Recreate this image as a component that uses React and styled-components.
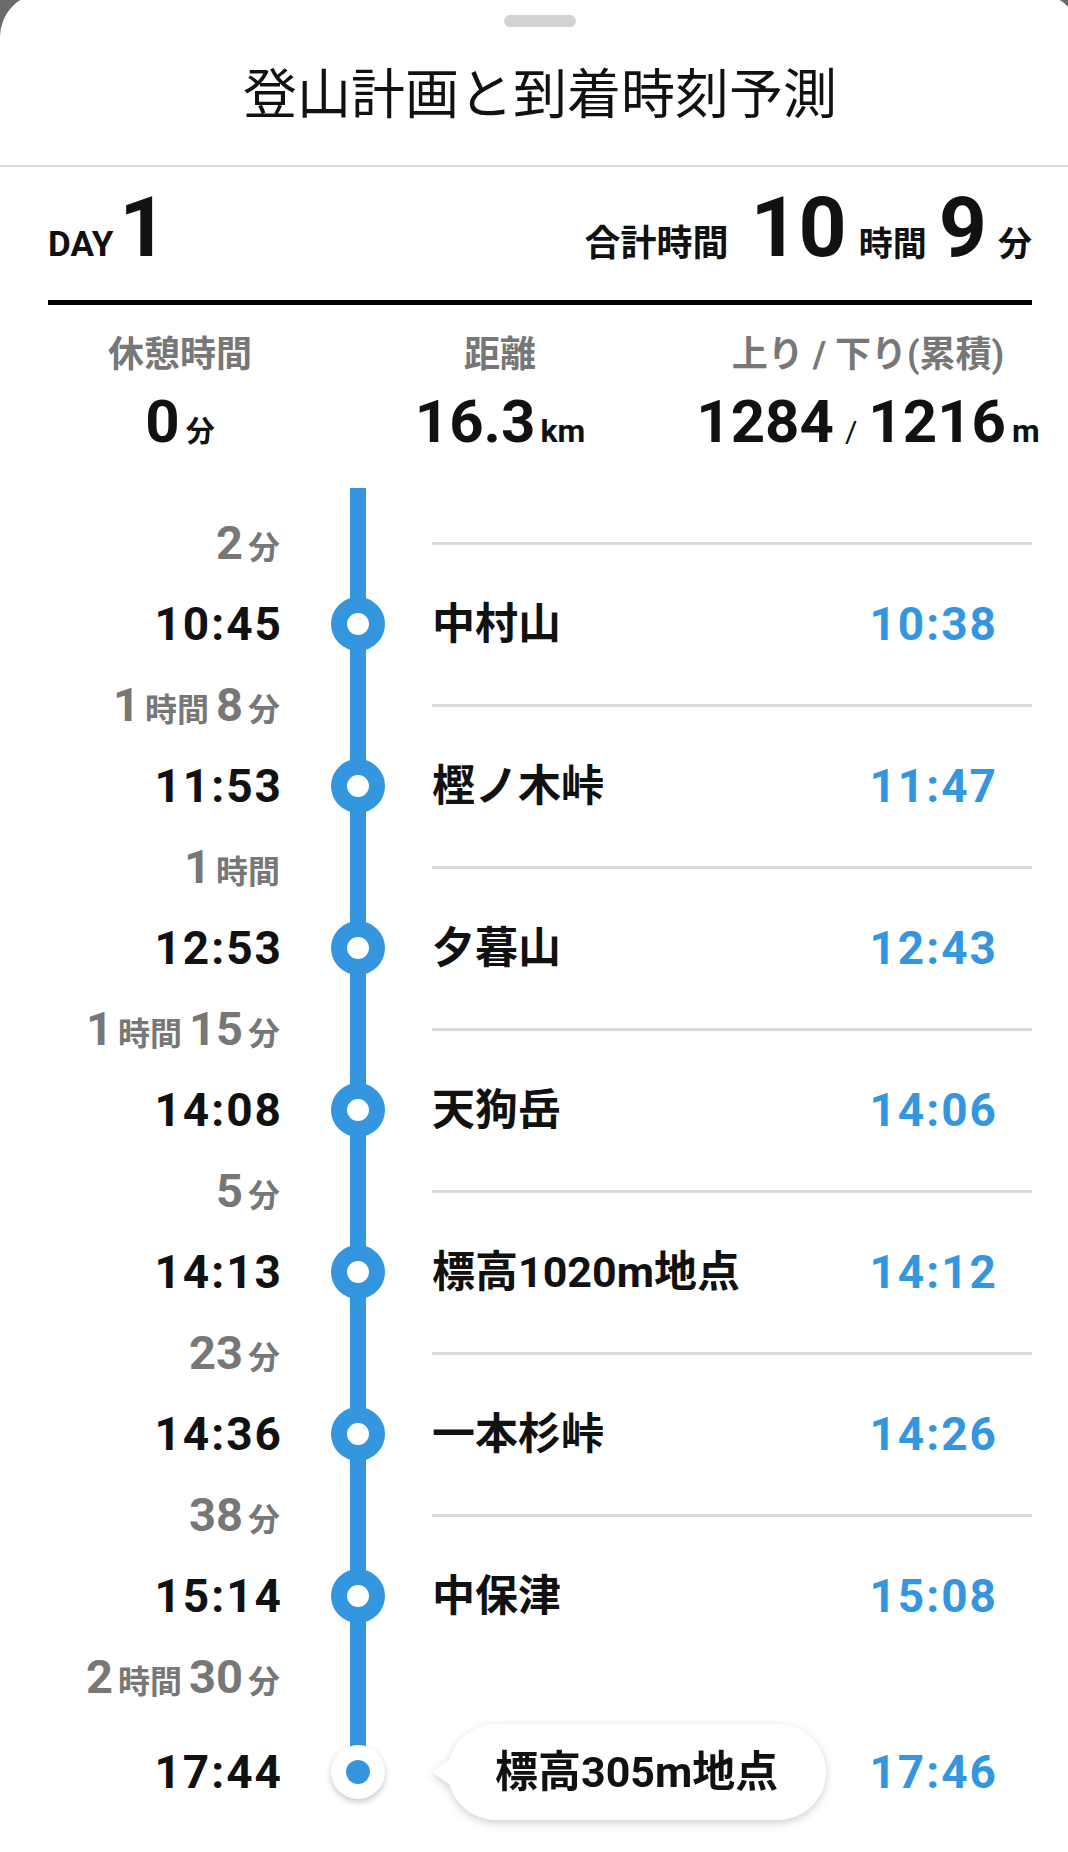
import React from 'react';
import styled, { createGlobalStyle } from 'styled-components';

const FONT = `"Roboto", "Noto Sans CJK JP", sans-serif`;
const BLUE = '#3596e0';
const GREY = '#777777';
const INK = '#111111';

const Global = createGlobalStyle`
  html, body { margin: 0; padding: 0; background: #6b6b6b; overflow-x: hidden; }
  body { font-family: ${FONT}; color: ${INK}; }
  * { box-sizing: border-box; }
`;

const Sheet = styled.div`
  width: 1080px;
  margin-top: -7px;
  min-height: calc(100vh + 7px);
  background: #fff;
  border-radius: 44px 44px 0 0;
  overflow: hidden;
`;

const Top = styled.header`
  padding: 22px 48px 42px;
  border-bottom: 2px solid #dcdcdc;
  display: flex;
  flex-direction: column;
  align-items: center;
`;

const Handle = styled.div`
  width: 72px;
  height: 12px;
  border-radius: 6px;
  background: #d3d3d3;
`;

const Title = styled.h1`
  margin: 32px 0 0;
  font-family: "Noto Sans CJK JP", sans-serif;
  font-weight: 400;
  font-size: 54px;
  line-height: 64px;
  text-align: center;
  color: ${INK};
`;

const Content = styled.div`
  padding: 0 48px;
`;

const DayRow = styled.div`
  display: flex;
  justify-content: space-between;
  align-items: baseline;
  margin-top: 19px;
  padding-bottom: 30px;
  border-bottom: 5px solid #000;
`;

const Group = styled.div`
  display: flex;
  align-items: baseline;
`;

const Label = styled.span`
  font-size: ${(p) => p.$size || 34}px;
  line-height: 40px;
  font-weight: 700;
  margin-left: ${(p) => p.$ml || 0}px;
`;

const Huge = styled.span`
  font-size: 84px;
  line-height: 84px;
  font-weight: 700;
  margin-left: ${(p) => p.$ml || 0}px;
`;

const Stats = styled.div`
  display: grid;
  grid-template-columns: 264px 376px 360px;
  margin: 28px -16px 0 0;
`;

const Stat = styled.div`
  display: flex;
  flex-direction: column;
  align-items: center;
`;

const StatLabel = styled.div`
  font-size: 36px;
  line-height: 44px;
  font-weight: 700;
  color: ${GREY};
  white-space: nowrap;
`;

const StatValue = styled.div`
  margin-top: 10px;
  height: 70px;
  display: flex;
  align-items: baseline;
  white-space: nowrap;
`;

const Big = styled.span`
  font-size: 60px;
  line-height: 70px;
  font-weight: 700;
`;

const Unit = styled.span`
  font-size: ${(p) => p.$size || 32}px;
  line-height: 32px;
  font-weight: 700;
  margin-left: ${(p) => p.$ml || 4}px;
`;

const Slash = styled.span`
  font-size: 30px;
  line-height: 30px;
  font-weight: 400;
  margin: 0 11px;
`;

const Timeline = styled.div`
  margin-top: 31px;
  padding-top: 20px;
  background: linear-gradient(${BLUE}, ${BLUE}) no-repeat 302px 0 / 16px calc(100% - 60px);
`;

const Row = styled.div`
  display: flex;
  align-items: center;
  height: ${(p) => p.$h}px;
`;

const Side = styled.div`
  width: 232px;
  display: flex;
  justify-content: flex-end;
  align-items: baseline;
  white-space: nowrap;
`;

const Track = styled.div`
  width: 54px;
  margin-left: 51px;
  display: flex;
  justify-content: center;
  align-items: center;
`;

const Main = styled.div`
  flex: 1;
  margin-left: 47px;
  display: flex;
  align-items: center;
  justify-content: space-between;
  padding-right: ${(p) => p.$pr || 0}px;
`;

const DurNum = styled.span`
  font-size: 47px;
  line-height: 60px;
  font-weight: 700;
  color: ${GREY};
  margin-left: ${(p) => (p.$first ? 0 : 7)}px;
`;

const DurUnit = styled.span`
  font-size: 32px;
  line-height: 32px;
  font-weight: 700;
  color: ${GREY};
  margin-left: 5px;
`;

const Separator = styled.div`
  flex: 1;
  height: 3px;
  background: #dadada;
`;

const Time = styled.span`
  font-size: 46px;
  line-height: 60px;
  font-weight: 700;
  letter-spacing: 2px;
  margin-right: -3px;
  color: ${(p) => (p.$blue ? BLUE : INK)};
`;

const Name = styled.span`
  font-size: 43px;
  line-height: 60px;
  font-weight: 700;
  white-space: nowrap;
`;

const Ring = styled.div`
  width: 54px;
  height: 54px;
  border-radius: 50%;
  border: 16px solid ${BLUE};
  background: #fff;
`;

const EndDot = styled.div`
  width: 54px;
  height: 54px;
  border-radius: 50%;
  background: #fff;
  box-shadow: 0 3px 6px rgba(0, 0, 0, 0.22);
  display: flex;
  align-items: center;
  justify-content: center;

  &::after {
    content: '';
    width: 24px;
    height: 24px;
    border-radius: 50%;
    background: ${BLUE};
  }
`;

const Bubble = styled.div`
  position: relative;
  margin-left: 16px;
  height: 96px;
  padding: 0 48px 0 47px;
  border-radius: 48px;
  background: #fff;
  display: flex;
  align-items: center;
  filter: drop-shadow(0 3px 4px rgba(0, 0, 0, 0.18));

  &::before {
    content: '';
    position: absolute;
    left: -16px;
    top: 50%;
    transform: translateY(-50%);
    border-top: 13px solid transparent;
    border-bottom: 13px solid transparent;
    border-right: 18px solid #fff;
  }
`;

const stops = [
  { dur: [[2, '分']], arr: '10:45', name: '中村山', plan: '10:38' },
  { dur: [[1, '時間'], [8, '分']], arr: '11:53', name: '樫ノ木峠', plan: '11:47' },
  { dur: [[1, '時間']], arr: '12:53', name: '夕暮山', plan: '12:43' },
  { dur: [[1, '時間'], [15, '分']], arr: '14:08', name: '天狗岳', plan: '14:06' },
  { dur: [[5, '分']], arr: '14:13', name: '標高1020m地点', plan: '14:12' },
  { dur: [[23, '分']], arr: '14:36', name: '一本杉峠', plan: '14:26' },
  { dur: [[38, '分']], arr: '15:14', name: '中保津', plan: '15:08' },
  { dur: [[2, '時間'], [30, '分']], arr: '17:44', name: '標高305m地点', plan: '17:46', last: true },
];

function Duration({ parts }) {
  return (
    <Side>
      {parts.map(([n, u], i) => (
        <React.Fragment key={i}>
          <DurNum $first={i === 0}>{n}</DurNum>
          <DurUnit>{u}</DurUnit>
        </React.Fragment>
      ))}
    </Side>
  );
}

export default function App() {
  return (
    <>
      <Global />
      <Sheet>
        <Top>
          <Handle />
          <Title>登山計画と到着時刻予測</Title>
        </Top>
        <Content>
          <DayRow>
            <Group>
              <Label $size={35}>DAY</Label>
              <Huge $ml={6}>1</Huge>
            </Group>
            <Group>
              <Label $size={36}>合計時間</Label>
              <Huge $ml={22}>10</Huge>
              <Label $size={34} $ml={12}>時間</Label>
              <Huge $ml={12}>9</Huge>
              <Label $size={34} $ml={11}>分</Label>
            </Group>
          </DayRow>

          <Stats>
            <Stat>
              <StatLabel>休憩時間</StatLabel>
              <StatValue>
                <Big>0</Big>
                <Unit $size={29} $ml={6}>分</Unit>
              </StatValue>
            </Stat>
            <Stat>
              <StatLabel>距離</StatLabel>
              <StatValue>
                <Big>16.3</Big>
                <Unit $ml={5}>km</Unit>
              </StatValue>
            </Stat>
            <Stat>
              <StatLabel>上り / 下り(累積)</StatLabel>
              <StatValue>
                <Big>1284</Big>
                <Slash>/</Slash>
                <Big>1216</Big>
                <Unit $ml={6}>m</Unit>
              </StatValue>
            </Stat>
          </Stats>

          <Timeline>
            {stops.map((s) => (
              <React.Fragment key={s.arr}>
                <Row $h={70}>
                  <Duration parts={s.dur} />
                  <Track />
                  <Main>{!s.last && <Separator />}</Main>
                </Row>
                <Row $h={s.last ? 120 : 92}>
                  <Side>
                    <Time>{s.arr}</Time>
                  </Side>
                  <Track>{s.last ? <EndDot /> : <Ring />}</Track>
                  <Main $pr={37}>
                    {s.last ? (
                      <Bubble>
                        <Name>{s.name}</Name>
                      </Bubble>
                    ) : (
                      <Name>{s.name}</Name>
                    )}
                    <Time $blue>{s.plan}</Time>
                  </Main>
                </Row>
              </React.Fragment>
            ))}
          </Timeline>
        </Content>
      </Sheet>
    </>
  );
}
